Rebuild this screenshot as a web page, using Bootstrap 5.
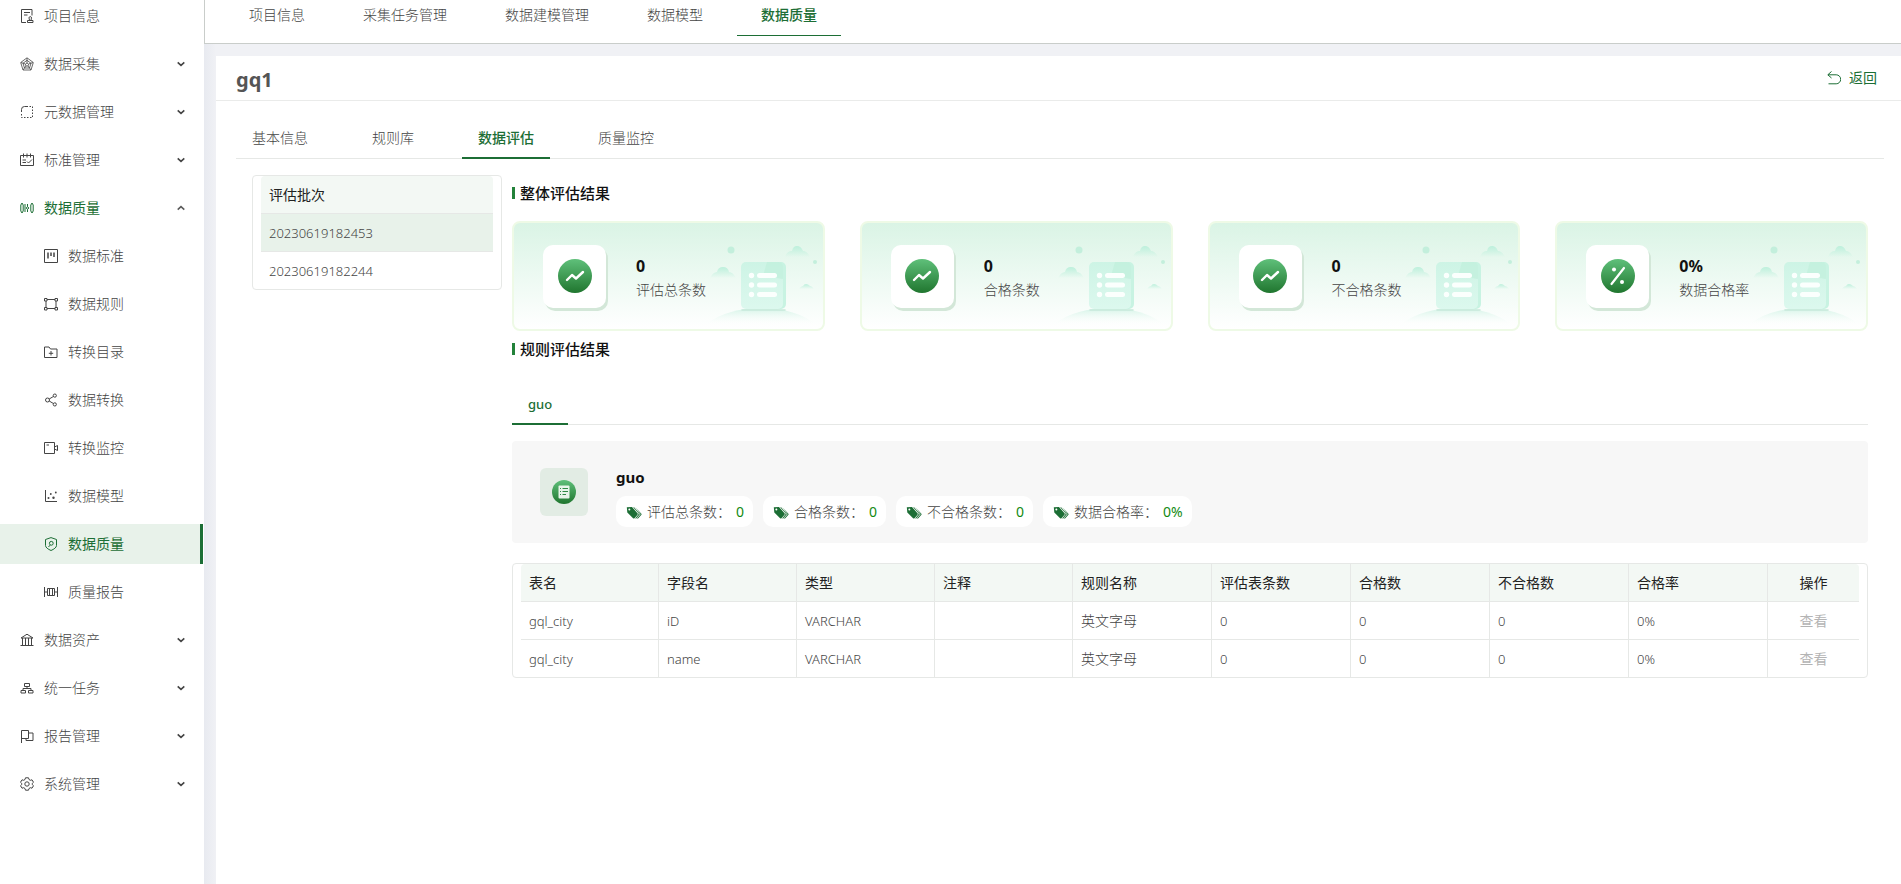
<!DOCTYPE html>
<html lang="zh-CN">
<head>
<meta charset="utf-8">
<meta name="viewport" content="width=device-width, initial-scale=1">
<title>数据质量</title>
<link href="https://cdn.jsdelivr.net/npm/bootstrap@5.3.0/dist/css/bootstrap.min.css" rel="stylesheet">
<style>
:root{--brand:#1c6e35;--ink:#444;--line:#e6e8e6;--latin:13px}
body{font-family:"Noto Sans","Noto Sans CJK SC",sans-serif;font-size:14px;line-height:20px;color:var(--ink);background:#fff;font-weight:300}
a{color:inherit;text-decoration:none}
.shell{min-height:100vh}
.side{width:204px;flex:none;background:#fff;overflow:hidden}
/* the menu is scrolled a little past its first row */
.menu{margin-top:-8px}
.menu a{height:40px;margin:4px 0;padding:0 19px 0 20px;gap:10px;border-right:3px solid transparent;margin-right:1px}
.menu .sub{padding-left:44px}
.menu .open{color:var(--brand);font-weight:400}
.menu .open .arrow{color:#5a5a5a}
.menu .current{color:var(--brand);background:#e8f2ea;border-right-color:var(--brand);font-weight:400}
.ico{width:14px;height:14px;flex:none;fill:none;stroke:currentColor;stroke-width:1}
.arrow{width:8px;height:8px;flex:none;fill:none;stroke:currentColor;stroke-width:1.6;margin-left:auto;margin-right:-4px}
.stage{background:linear-gradient(90deg,#e8eaf0,#f0f1f5 12px);padding:0}
.topbar{height:44px;background:#fff;border-left:1px solid #c9cdca;border-bottom:1px solid #c9cdca;padding-left:20px;gap:10px}
.topbar .nav-link{height:36px;padding:5px 24px 0;border-bottom:1px solid transparent;color:inherit}
.topbar .nav-link.active{color:var(--brand);border-color:var(--brand);font-weight:500}
.panel{margin:12px 0 0 12px;background:#fff}
.phead{height:45px;border-bottom:1px solid #eaebea;padding:0 24px 0 20px}
.phead h1{font-size:20px;line-height:28px;font-weight:700;color:#555;padding-top:3px}
.back{border:0;background:none;padding:0;color:var(--brand);gap:8px;font-weight:400;line-height:20px}
.pbody{padding:17px 17px 20px 20px}
.tabline{gap:32px;border-bottom:1px solid var(--line)}
.tabline .nav-link{height:41px;padding:10px 16px 0;margin-bottom:-1px;border-bottom:2px solid transparent;color:inherit}
.tabline .nav-link.active{color:var(--brand);border-color:var(--brand);font-weight:500}
.work{padding:16px 16px 0;gap:10px}
.batch{width:250px;flex:none}
.boxed{border:1px solid var(--line);border-radius:4px;padding:0 8px}
.grid{width:100%;table-layout:fixed;border-collapse:separate;border-spacing:0}
.grid th,.grid td{height:38px;padding:0 8px;border-bottom:1px solid var(--line);vertical-align:middle}
.grid th{background:#f3f8f4;color:#222;font-weight:400}
.grid th:first-child{border-top-left-radius:4px}
.grid th:last-child{border-top-right-radius:4px}
.grid tbody tr:last-child td{border-bottom:0;height:37px}
.grid .picked td{background:#e8f2ea}
.ruled th{width:138px}
.ruled th:nth-child(n+5){width:auto}
.ruled th:not(:last-child),.ruled td:not(:last-child){border-right:1px solid var(--line)}
.ruled .act{width:91px;text-align:center}
.ruled th.act:last-child{width:91px}
.look{border:0;background:none;padding:0;color:#b4b4b4;line-height:20px;font-weight:400}
.en{font-size:var(--latin)}
.sect{font-size:15px;line-height:20px;font-weight:500;color:#111;gap:5px;margin:0}
.sect::before{content:"";width:3px;height:12px;background:#23823a}
.kpis{display:grid;grid-template-columns:repeat(4,minmax(0,1fr));gap:35px;margin:18px 0 8px}
.kpi{height:110px;border:2px solid #eefae6;border-radius:8px;background:linear-gradient(#daf4e5,#fff);overflow:hidden;padding-left:29px}
.tile{width:63px;height:63px;flex:none;border-radius:10px;background:#fff;box-shadow:2px 3px 0 #d3e7d8;margin-right:30px}
.fig{padding-top:3px}
.kpi .num{font-size:16px;line-height:24px;font-weight:700;color:#111}
.kpi .cap{line-height:24px;white-space:nowrap}
.scene{width:116px;height:106px;margin-left:auto;flex:none}
.rules{margin:25px 0 16px}
.rules .nav-link{height:41px;padding-top:10px}
.summary{height:102px;background:#f7f7f7;border-radius:4px;padding:0 28px;gap:28px;margin-bottom:20px}
.badgebox{width:48px;height:48px;flex:none;border-radius:6px;background:#e2ece4}
.facts{padding-top:10px}
.summary h3{font-size:15px;line-height:20px;font-weight:700;color:#111;margin:0 0 9px}
.chips{gap:10px}
.chip{height:31px;border-radius:10px;background:#fff;padding:0 9px 0 10px;gap:5px;white-space:nowrap}
.chip b{color:#128a12;font-weight:400}
.chip svg{width:16px;height:16px;fill:var(--brand)}
</style>
</head>
<body>
<svg class="position-absolute" width="0" height="0" aria-hidden="true">
<defs>
<linearGradient id="gr" x1="0" y1="0" x2="0" y2="1"><stop offset="0" stop-color="#5fc07a"/><stop offset="1" stop-color="#20762f"/></linearGradient>
<linearGradient id="cl" x1="0" y1="0" x2="0" y2="1"><stop offset="0" stop-color="#bdf0dc"/><stop offset="1" stop-color="#bdf0dc" stop-opacity="0"/></linearGradient>
<linearGradient id="hl" x1="0" y1="0" x2="0" y2="1"><stop offset="0" stop-color="#d2f3e6"/><stop offset="1" stop-color="#fff" stop-opacity="0"/></linearGradient>
<linearGradient id="bx" x1="0" y1="0" x2="0" y2="1"><stop offset="0" stop-color="#cdf4e5"/><stop offset="1" stop-color="#dcf8ee"/></linearGradient>
</defs>
<symbol id="i-doc" viewBox="0 0 14 14"><path d="M6 13.500H1.500V.5h10.500v6M4 3.500h6M4 6h3.500M7.500 13.500v-2h5.500v2zM9 11.500l.5-1.500a1.300 1.300 0 1 1 1.500 0l.5 1.500"/></symbol>
<symbol id="i-radar" viewBox="0 0 14 14"><path d="M7 .8 13.300 5.500 11 13H3L.7 5.500zM7 3.300l4 3L9.500 11h-5L3 6.300zM7 6l1.600 1.200L8 9H6L5.400 7.200zM7 1v5M13 5.500 8.600 7M1 5.500 5.400 7M3 13l3-4M11 13 8 9" stroke-width=".8"/></symbol>
<symbol id="i-dash" viewBox="0 0 14 14"><path d="M1.500 7V4.500a3 3 0 0 1 3-3H8"/><path stroke-dasharray="1.500 1.500" d="M9.500 1.500h3v11h-11V8"/></symbol>
<symbol id="i-cal" viewBox="0 0 14 14"><path d="M.5 2.500h13v10H.5zM3.500.5v4M7 .5v4M10.500.5v4M2.500 7H6M2.500 9.500H6M7 8.500l1.500 1.500L12 6.500"/></symbol>
<symbol id="i-qual" viewBox="0 0 14 14"><path d="M2 2 3.200 4v6L2 12 .8 10V4zM12 2l1.200 2v6L12 12l-1.200-2V4zM5 3v8M7.500 3v2.500M7.500 8.500V11M7.500 5.500 8.800 7 7.500 8.500 6.300 7z"/></symbol>
<symbol id="i-board" viewBox="0 0 14 14"><path d="M.5.500h13v13H.5z"/><path stroke-width="1.500" d="M4 3.500v6M7 3.500v3.500M10 3.500v4.500"/></symbol>
<symbol id="i-frame" viewBox="0 0 14 14"><path d="M.5 1.500H3V4H.5zM11 1.500h2.500V4H11zM.5 10.500H3V13H.5zM11 10.500h2.500V13H11zM3 2.500h8M3 11.500h8M2 4v6.500M12 4v6.500"/></symbol>
<symbol id="i-folder" viewBox="0 0 14 14"><path d="M.5 2h4.500l1.500 2h6.500v8.500H.5zM7 6v4.500M4.800 8.300h4.400"/></symbol>
<symbol id="i-share" viewBox="0 0 14 14"><circle cx="3.500" cy="7" r="2"/><circle cx="10.800" cy="2.600" r="1.600"/><circle cx="10.800" cy="11.400" r="1.600"/><path d="m5.200 6 4.200-2.500M5.200 8l4.200 2.500"/></symbol>
<symbol id="i-video" viewBox="0 0 14 14"><path d="M.5 1.500H10.500v11H.5zM2.500 4H5M10.500 6 13.500 4.500v5L10.500 8"/></symbol>
<symbol id="i-dots" viewBox="0 0 14 14"><path d="M1.500 1v11.500H13"/><g fill="currentColor" stroke="none"><circle cx="4.500" cy="9" r="1"/><circle cx="9.500" cy="8.800" r="1.200"/><circle cx="6.800" cy="5" r=".9"/><circle cx="11.800" cy="3.500" r=".9"/></g></symbol>
<symbol id="i-shield" viewBox="0 0 14 14"><path d="M7 .6 12.500 2.500v6c0 2-2.500 3.700-5.500 5-3-1.300-5.500-3-5.500-5v-6zM6 8.200 4.500 10"/><circle cx="7.300" cy="6.300" r="1.900"/></symbol>
<symbol id="i-report" viewBox="0 0 14 14"><path d="M.5 2v10M13.500 2v10M3.500 3.500h7v7h-7zM5.500 3.500v7M8.500 3.500v7M.5 7h3M10.500 7h3"/></symbol>
<symbol id="i-bank" viewBox="0 0 14 14"><path d="M1 5 7 1.200 13 5zM.5 12.500h13M2.500 5v7.500M5.500 5v7.500M8.500 5v7.500M11.500 5v7.500"/></symbol>
<symbol id="i-tree" viewBox="0 0 14 14"><path d="M4.500 2.500h5v3h-5zM1 9.500h4.500V12H1zM8.500 9.500H13V12H8.500zM7 5.500v2M3 9.500v-2h8v2"/></symbol>
<symbol id="i-flag" viewBox="0 0 14 14"><path d="M1.500 14V1.500h7v8h-7M8.500 4h4.500v7.500H6v-2"/></symbol>
<symbol id="i-gear" viewBox="0 0 14 14"><path d="M5.500.8h3l.5 1.700 1.300.8 1.700-.5 1.500 2.500L12.200 6.500v1l1.300 1.200-1.500 2.500-1.700-.5-1.300.8-.5 1.700h-3L5 11.500l-1.300-.8-1.700.5L.5 8.700 1.800 7.500v-1L.5 5.300 2 2.800l1.700.5L5 2.500z"/><circle cx="7" cy="7" r="2.200"/></symbol>
<symbol id="a-down" viewBox="0 0 8 8"><path d="m.7 2.300 3.300 3 3.300-3"/></symbol>
<symbol id="a-up" viewBox="0 0 8 8"><path d="m.7 5.700 3.300-3 3.300 3"/></symbol>
<symbol id="i-tags" viewBox="0 0 16 16"><path fill-rule="evenodd" d="M.8 3.200 6 3l5.500 6.300a1 1 0 0 1 0 1.400L8.500 14.200a1 1 0 0 1-1.400 0L1.300 8.500zM3.300 4.500a1 1 0 1 0 .1 2 1 1 0 0 0-.1-2z"/><path d="M7.200 3.300h.9l5.300 6c.5.500.5 1 0 1.500l-3.400 4-.7-.6 3-3.600c.5-.6.500-1 0-1.500zM9.600 3.600l5.600 6c.5.500.5 1 0 1.500l-3.400 3.700-.7-.6 3.100-3.400c.4-.5.400-.8 0-1.300z"/></symbol>
<symbol id="s-trend" viewBox="0 0 34 34"><circle cx="17" cy="17" r="17" fill="url(#gr)"/><path d="M9 21l5-5 4 3.500 7-6.500" fill="none" stroke="#fff" stroke-width="2.400" stroke-linecap="round" stroke-linejoin="round"/></symbol>
<symbol id="s-pct" viewBox="0 0 34 34"><circle cx="17" cy="17" r="17" fill="url(#gr)"/><path d="M23 9 10.500 25" stroke="#fff" stroke-width="2.200" stroke-linecap="round"/><circle cx="13" cy="10.500" r="2" fill="#fff"/><circle cx="21" cy="23" r="2" fill="#fff"/></symbol>
<symbol id="s-scene" viewBox="0 0 116 106">
<path fill="url(#hl)" d="M-2 102Q20 85 54 85T110 102z"/>
<circle cx="24" cy="27" r="3.500" fill="#c3efdc"/><circle cx="108" cy="39" r="2" fill="#c3efdc"/>
<path fill="url(#cl)" d="M78 34q2-6 7-6 1-5 5-5t6 5q4 0 7 6z"/>
<path fill="url(#cl)" d="M3 55q3-6 7-6 1-5 6-5t6 5q4 0 7 6z"/>
<path fill="url(#cl)" d="M92 66q2-3 4-3 1-2 3-2t4 2q2 0 4 3z"/>
<path d="M35 87h43" stroke="#c6e9da" stroke-width="1.500" stroke-linecap="round"/>
<rect x="37" y="39" width="42" height="47" rx="5" fill="#c8f3e2"/><rect x="34" y="39" width="42" height="47" rx="5" fill="url(#bx)"/>
<path d="M60 39h11q5 0 5 5v12L56 53z" fill="#c0f0dc" opacity=".7"/>
<g fill="#fbfffd"><circle cx="44.500" cy="52.500" r="2.700"/><circle cx="44.500" cy="62" r="2.700"/><circle cx="44.500" cy="71.500" r="2.700"/><rect x="50" y="50" width="20" height="5" rx="2.500"/><rect x="50" y="59.500" width="20" height="5" rx="2.500"/><rect x="50" y="69" width="20" height="5" rx="2.500"/></g></symbol>
</svg>

<div class="shell d-flex">
<aside class="side">
<nav class="menu d-flex flex-column">
<a href="#" class="d-flex align-items-center"><svg class="ico"><use href="#i-doc"/></svg>项目信息</a>
<a href="#" class="d-flex align-items-center"><svg class="ico"><use href="#i-radar"/></svg>数据采集<svg class="arrow"><use href="#a-down"/></svg></a>
<a href="#" class="d-flex align-items-center"><svg class="ico"><use href="#i-dash"/></svg>元数据管理<svg class="arrow"><use href="#a-down"/></svg></a>
<a href="#" class="d-flex align-items-center"><svg class="ico"><use href="#i-cal"/></svg>标准管理<svg class="arrow"><use href="#a-down"/></svg></a>
<a href="#" class="d-flex align-items-center open"><svg class="ico"><use href="#i-qual"/></svg>数据质量<svg class="arrow"><use href="#a-up"/></svg></a>
<a href="#" class="d-flex align-items-center sub"><svg class="ico"><use href="#i-board"/></svg>数据标准</a>
<a href="#" class="d-flex align-items-center sub"><svg class="ico"><use href="#i-frame"/></svg>数据规则</a>
<a href="#" class="d-flex align-items-center sub"><svg class="ico"><use href="#i-folder"/></svg>转换目录</a>
<a href="#" class="d-flex align-items-center sub"><svg class="ico"><use href="#i-share"/></svg>数据转换</a>
<a href="#" class="d-flex align-items-center sub"><svg class="ico"><use href="#i-video"/></svg>转换监控</a>
<a href="#" class="d-flex align-items-center sub"><svg class="ico"><use href="#i-dots"/></svg>数据模型</a>
<a href="#" class="d-flex align-items-center sub current" aria-current="page"><svg class="ico"><use href="#i-shield"/></svg>数据质量</a>
<a href="#" class="d-flex align-items-center sub"><svg class="ico"><use href="#i-report"/></svg>质量报告</a>
<a href="#" class="d-flex align-items-center"><svg class="ico"><use href="#i-bank"/></svg>数据资产<svg class="arrow"><use href="#a-down"/></svg></a>
<a href="#" class="d-flex align-items-center"><svg class="ico"><use href="#i-tree"/></svg>统一任务<svg class="arrow"><use href="#a-down"/></svg></a>
<a href="#" class="d-flex align-items-center"><svg class="ico"><use href="#i-flag"/></svg>报告管理<svg class="arrow"><use href="#a-down"/></svg></a>
<a href="#" class="d-flex align-items-center"><svg class="ico"><use href="#i-gear"/></svg>系统管理<svg class="arrow"><use href="#a-down"/></svg></a>
</nav>
</aside>

<div class="stage flex-grow-1 d-flex flex-column">
<nav class="topbar nav flex-nowrap">
<a class="nav-link" href="#">项目信息</a>
<a class="nav-link" href="#">采集任务管理</a>
<a class="nav-link" href="#">数据建模管理</a>
<a class="nav-link" href="#">数据模型</a>
<a class="nav-link active" href="#">数据质量</a>
</nav>
<main class="panel flex-grow-1">
<header class="phead d-flex align-items-center justify-content-between">
<h1 class="m-0">gq1</h1>
<button type="button" class="back d-flex align-items-center"><svg class="ico" viewBox="0 0 14 14"><path d="M4.500.5.800 3.800 4.500 7M1 3.800h8.200a4.500 4.500 0 0 1 0 9H1.500"/></svg>返回</button>
</header>
<div class="pbody">
<nav class="tabline nav">
<a class="nav-link" href="#">基本信息</a>
<a class="nav-link" href="#">规则库</a>
<a class="nav-link active" href="#">数据评估</a>
<a class="nav-link" href="#">质量监控</a>
</nav>
<div class="work d-flex align-items-start">
<div class="batch boxed">
<table class="grid">
<thead><tr><th scope="col">评估批次</th></tr></thead>
<tbody class="en"><tr class="picked"><td>20230619182453</td></tr><tr><td>20230619182244</td></tr></tbody>
</table>
</div>
<section class="flex-grow-1 pt-2">
<h2 class="sect d-flex align-items-center">整体评估结果</h2>
<div class="kpis">
<div class="kpi d-flex align-items-center"><div class="tile d-flex align-items-center justify-content-center"><svg width="34" height="34"><use href="#s-trend"/></svg></div><div class="fig"><div class="num">0</div><div class="cap">评估总条数</div></div><svg class="scene"><use href="#s-scene"/></svg></div>
<div class="kpi d-flex align-items-center"><div class="tile d-flex align-items-center justify-content-center"><svg width="34" height="34"><use href="#s-trend"/></svg></div><div class="fig"><div class="num">0</div><div class="cap">合格条数</div></div><svg class="scene"><use href="#s-scene"/></svg></div>
<div class="kpi d-flex align-items-center"><div class="tile d-flex align-items-center justify-content-center"><svg width="34" height="34"><use href="#s-trend"/></svg></div><div class="fig"><div class="num">0</div><div class="cap">不合格条数</div></div><svg class="scene"><use href="#s-scene"/></svg></div>
<div class="kpi d-flex align-items-center"><div class="tile d-flex align-items-center justify-content-center"><svg width="34" height="34"><use href="#s-pct"/></svg></div><div class="fig"><div class="num">0%</div><div class="cap">数据合格率</div></div><svg class="scene"><use href="#s-scene"/></svg></div>
</div>
<h2 class="sect d-flex align-items-center">规则评估结果</h2>
<nav class="tabline rules nav"><a class="nav-link active en" href="#">guo</a></nav>
<div class="summary d-flex align-items-center">
<div class="badgebox d-flex align-items-center justify-content-center"><svg width="24" height="24" viewBox="0 0 24 24"><circle cx="12" cy="12" r="12" fill="url(#gr)"/><rect x="6.500" y="5.500" width="11" height="13" rx="1" fill="#e8f5ea"/><path d="M8 8.500h1M10.500 8.500H16M8 11.500h1M10.500 11.500H16M8 14.500h1M10.500 14.500H14" stroke="#2f8a45"/></svg></div>
<div class="facts">
<h3>guo</h3>
<div class="d-flex flex-wrap chips">
<span class="chip d-flex align-items-center"><svg><use href="#i-tags"/></svg><span>评估总条数：</span><b>0</b></span>
<span class="chip d-flex align-items-center"><svg><use href="#i-tags"/></svg><span>合格条数：</span><b>0</b></span>
<span class="chip d-flex align-items-center"><svg><use href="#i-tags"/></svg><span>不合格条数：</span><b>0</b></span>
<span class="chip d-flex align-items-center"><svg><use href="#i-tags"/></svg><span>数据合格率：</span><b>0%</b></span>
</div>
</div>
</div>
<div class="boxed">
<table class="grid ruled">
<thead><tr><th scope="col">表名</th><th scope="col">字段名</th><th scope="col">类型</th><th scope="col">注释</th><th scope="col">规则名称</th><th scope="col">评估表条数</th><th scope="col">合格数</th><th scope="col">不合格数</th><th scope="col">合格率</th><th scope="col" class="act">操作</th></tr></thead>
<tbody>
<tr><td class="en">gql_city</td><td class="en">iD</td><td class="en">VARCHAR</td><td></td><td>英文字母</td><td class="en">0</td><td class="en">0</td><td class="en">0</td><td class="en">0%</td><td class="act"><button type="button" class="look">查看</button></td></tr>
<tr><td class="en">gql_city</td><td class="en">name</td><td class="en">VARCHAR</td><td></td><td>英文字母</td><td class="en">0</td><td class="en">0</td><td class="en">0</td><td class="en">0%</td><td class="act"><button type="button" class="look">查看</button></td></tr>
</tbody>
</table>
</div>
</section>
</div>
</div>
</main>
</div>
</div>
<script src="https://cdn.jsdelivr.net/npm/bootstrap@5.3.0/dist/js/bootstrap.bundle.min.js"></script>
</body>
</html>
